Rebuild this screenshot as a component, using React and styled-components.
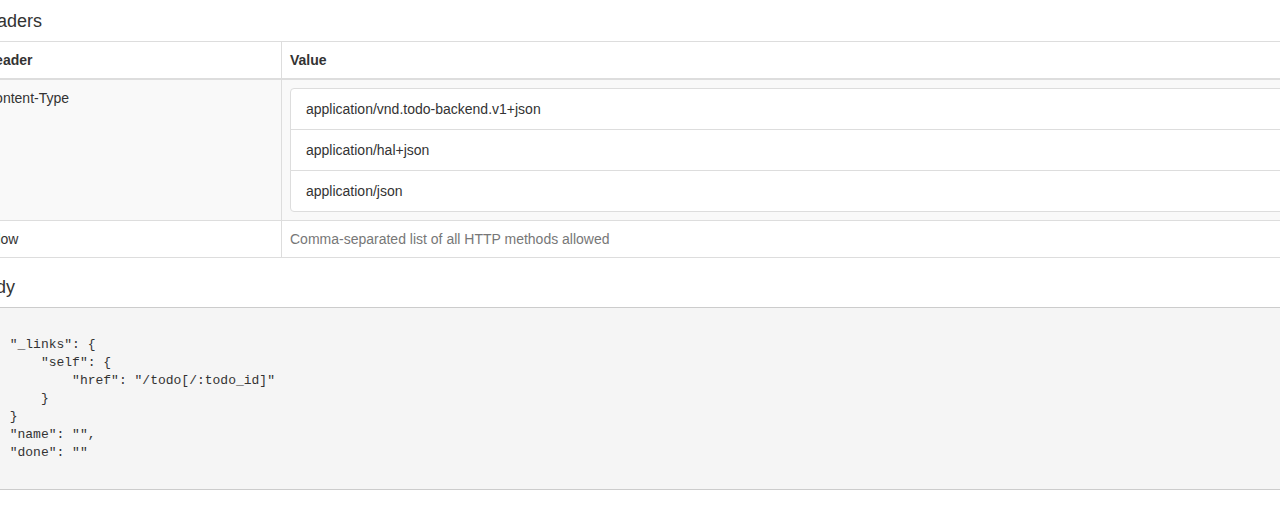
import styled, { createGlobalStyle } from "styled-components";

const GlobalStyle = createGlobalStyle`
    html, body {
        margin: 0;
        padding: 0;
        background: #fff;
        overflow: hidden;
    }
    body {
        font-family: "Liberation Sans", Arial, Helvetica, sans-serif;
        font-size: 14px;
        line-height: 20px;
        color: #333;
    }
`;

const Page = styled.div`
    width: 1340px;
    margin-left: -24px;
`;

const Title = styled.h4`
    font-size: 18px;
    font-weight: 500;
    line-height: 20px;
    margin: ${(p) => (p.$first ? "11px" : "10px")} 0 10px -2px;
    color: #333;
`;

const Table = styled.table`
    width: 100%;
    border-collapse: collapse;
    border-spacing: 0;
    margin-bottom: 19px;
    border: 1px solid #ddd;
`;

const HeadCell = styled.th`
    text-align: left;
    font-weight: bold;
    padding: 8px;
    border: 1px solid #ddd;
    border-bottom-width: 2px;
    vertical-align: bottom;
    width: ${(p) => p.$width || "auto"};
`;

const Row = styled.tr`
    background: ${(p) => (p.$striped ? "#f9f9f9" : "#fff")};
`;

const Cell = styled.td`
    padding: 8px;
    border: 1px solid #ddd;
    vertical-align: top;
    color: ${(p) => (p.$muted ? "#777" : "#333")};
`;

const List = styled.ul`
    list-style: none;
    margin: 0;
    padding: 0;
`;

const ListItem = styled.li`
    position: relative;
    display: block;
    padding: 10px 15px;
    background: #fff;
    border: 1px solid #ddd;
    margin-bottom: -1px;
    &:first-child {
        border-top-left-radius: 4px;
        border-top-right-radius: 4px;
    }
    &:last-child {
        margin-bottom: 0;
        border-bottom-left-radius: 4px;
        border-bottom-right-radius: 4px;
    }
`;

const Code = styled.pre`
    margin: 0 0 10px -8px;
    padding: 9.5px;
    font-family: "Liberation Mono", "Courier New", monospace;
    font-size: 13px;
    line-height: 18px;
    color: #333;
    background: #f5f5f5;
    border: 1px solid #ccc;
    border-radius: 4px;
    white-space: pre;
`;

const contentTypes = [
    "application/vnd.todo-backend.v1+json",
    "application/hal+json",
    "application/json",
];

const body = `{
    "_links": {
        "self": {
            "href": "/todo[/:todo_id]"
        }
    }
    "name": "",
    "done": ""
}`;

export default function App() {
    return (
        <Page>
            <GlobalStyle />
            <Title $first>Headers</Title>
            <Table>
                <thead>
                    <tr>
                        <HeadCell $width="288px">Header</HeadCell>
                        <HeadCell>Value</HeadCell>
                    </tr>
                </thead>
                <tbody>
                    <Row $striped>
                        <Cell>Content-Type</Cell>
                        <Cell>
                            <List>
                                {contentTypes.map((t) => (
                                    <ListItem key={t}>{t}</ListItem>
                                ))}
                            </List>
                        </Cell>
                    </Row>
                    <Row>
                        <Cell>Allow</Cell>
                        <Cell $muted>Comma-separated list of all HTTP methods allowed</Cell>
                    </Row>
                </tbody>
            </Table>
            <Title>Body</Title>
            <Code>{body}</Code>
        </Page>
    );
}
